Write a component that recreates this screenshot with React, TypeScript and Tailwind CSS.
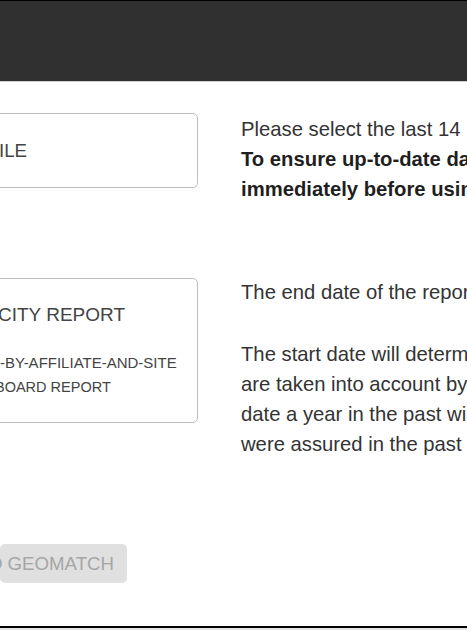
export default function App() {
  return (
    <div className="w-[467px] h-[630px] overflow-hidden bg-white flex flex-col font-['Liberation_Sans',Arial,sans-serif]">
      {/* Top bar */}
      <div className="h-[82px] shrink-0 bg-[#303030] border-t border-black border-b border-b-[#cfcfcf]" />

      {/* Body */}
      <div className="flex-1 flex overflow-hidden">
        {/* Left: options (cut off on the left) */}
        <div className="w-[206px] shrink-0 -ml-[8px] pt-[31px] flex flex-col items-stretch">
          <div className="h-[75px] rounded-[5px] border border-[#bdbdbd] flex items-center pl-[6px]">
            <span className="text-[18.67px] text-[#444] whitespace-nowrap">ILE</span>
          </div>

          <div className="mt-[90px] rounded-[5px] border border-[#bdbdbd] pl-[5px] pt-[22px] pb-[22px] flex flex-col items-start">
            <span className="text-[19px] leading-[28px] text-[#444] whitespace-nowrap">CITY REPORT</span>
            <span className="mt-[21px] ml-[2px] text-[15px] leading-[25px] text-[#444] whitespace-nowrap">
              -BY-AFFILIATE-AND-SITE
            </span>
            <span className="-ml-[3px] text-[14.5px] leading-[25px] text-[#444] whitespace-nowrap">BOARD REPORT</span>
          </div>

          <div className="mt-[121px] ml-[8px] self-start">
            <button
              disabled
              className="h-[39px] w-[127px] rounded-[5px] bg-[#e0e0e0] text-[#a6a6a6] text-[18.67px] flex items-center justify-end pr-[13px] whitespace-nowrap"
            >
              O GEOMATCH
            </button>
          </div>
        </div>

        {/* Right: instructions (cut off on the right) */}
        <div className="flex-1 min-w-0 pl-[43px] pt-[32px] text-[20.25px] leading-[30px] text-[#333] overflow-hidden">
          <p className="whitespace-nowrap">Please select the last 14</p>
          <p className="whitespace-nowrap font-bold text-[#1f1f1f]">To ensure up-to-date data, please sync</p>
          <p className="whitespace-nowrap font-bold text-[#1f1f1f]">immediately before using this tool.</p>

          <p className="mt-[73px] whitespace-nowrap">The end date of the report is today.</p>

          <p className="mt-[32px] whitespace-nowrap">The start date will determine which sites</p>
          <p className="whitespace-nowrap">are taken into account by the report. A start</p>
          <p className="whitespace-nowrap">date a year in the past will include sites that</p>
          <p className="whitespace-nowrap">were assured in the past year.</p>
        </div>
      </div>

      {/* Bottom edge */}
      <div className="h-[2px] shrink-0 bg-black" />
      <div className="h-[2px] shrink-0 bg-[#e4e4e4]" />
    </div>
  );
}
